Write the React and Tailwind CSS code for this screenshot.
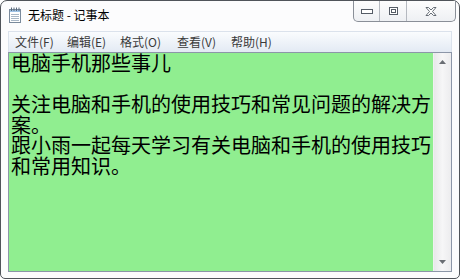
import React from "react";

function NotepadIcon() {
  return (
    <svg width="14" height="16" viewBox="0 0 14 16">
      <rect x="1.5" y="2.5" width="11" height="13" fill="#ffffff" stroke="#7a8a9c" />
      <rect x="2" y="3" width="10" height="2" fill="#9fc3e6" />
      <line x1="3" y1="7.5" x2="11" y2="7.5" stroke="#a9b7c6" />
      <line x1="3" y1="9.5" x2="11" y2="9.5" stroke="#a9b7c6" />
      <line x1="3" y1="11.5" x2="11" y2="11.5" stroke="#a9b7c6" />
      <line x1="3" y1="13.5" x2="11" y2="13.5" stroke="#a9b7c6" />
      <line x1="3.5" y1="0.5" x2="3.5" y2="4" stroke="#5b6b7c" />
      <line x1="6" y1="0.5" x2="6" y2="4" stroke="#5b6b7c" />
      <line x1="8.5" y1="0.5" x2="8.5" y2="4" stroke="#5b6b7c" />
      <line x1="11" y1="0.5" x2="11" y2="4" stroke="#5b6b7c" />
    </svg>
  );
}

function CaptionButtons() {
  return (
    <div className="flex h-[21px] border border-t-0 border-[#8a8f98] rounded-b-[5px] bg-gradient-to-b from-[#fdfdfd] to-[#eef0f3] overflow-hidden -mr-[4px]">
      <div className="w-[26px] flex items-center justify-center border-r border-[#b5b9c0]">
        <svg width="12" height="5" viewBox="0 0 12 5">
          <rect x="0.5" y="0.5" width="11" height="4" fill="#ffffff" stroke="#555c66" />
        </svg>
      </div>
      <div className="w-[27px] flex items-center justify-center border-r border-[#b5b9c0]">
        <svg width="9" height="8" viewBox="0 0 9 8">
          <rect x="0.5" y="0.5" width="8" height="7" fill="#ffffff" stroke="#555c66" />
          <rect x="2.5" y="2.5" width="4" height="3" fill="none" stroke="#555c66" />
        </svg>
      </div>
      <div className="w-[48px] flex items-center justify-center">
        <svg width="12" height="9" viewBox="0 0 12 9">
          <path
            d="M1 0.5 L3.5 0.5 L6 3 L8.5 0.5 L11 0.5 L7.5 4.5 L11 8.5 L8.5 8.5 L6 6 L3.5 8.5 L1 8.5 L4.5 4.5 Z"
            fill="#ffffff"
            stroke="#555c66"
            strokeWidth="0.9"
            strokeLinejoin="round"
          />
        </svg>
      </div>
    </div>
  );
}

export default function App() {
  const menus = [
    ["文件(F)", "w-[52px]"],
    ["编辑(E)", "w-[53px]"],
    ["格式(O)", "w-[57px]"],
    ["查看(V)", "w-[54px]"],
    ["帮助(H)", "w-[54px]"],
  ];
  return (
    <div
      className="w-[461px] h-[280px] bg-white"
      style={{ fontFamily: '"Noto Sans CJK SC", "Noto Sans", sans-serif' }}
    >
      <div className="w-[460px] h-[279px] border border-[#50545a] rounded-t-[7px] rounded-b-[5px] bg-[#fcfcfd] flex flex-col px-[7px] pb-[6px]">
        {/* title bar */}
        <div className="h-[30px] flex items-start justify-between shrink-0">
          <div className="flex items-center h-[28px] gap-[6px]">
            <NotepadIcon />
            <span className="text-[12px] leading-none text-black">无标题 - 记事本</span>
          </div>
          <CaptionButtons />
        </div>
        {/* menu bar */}
        <div className="h-[21px] shrink-0 flex items-center border border-b-0 border-[#dbe2ec] bg-gradient-to-b from-[#fafcfe] to-[#e3eaf4] pl-[6px]">
          {menus.map(([t, w]) => (
            <div key={t} className={`${w} text-[12px] leading-none text-[#3a3a3a]`}>
              {t}
            </div>
          ))}
        </div>
        {/* edit area */}
        <div className="flex-1 flex border border-[#8c96a8] min-h-0">
          <div className="flex-1 bg-[#90ee90] pl-[2px]">
            <div className="text-[20px] leading-[20.6px] text-black">
              <div>电脑手机那些事儿</div>
              <div>&nbsp;</div>
              <div>关注电脑和手机的使用技巧和常见问题的解决方</div>
              <div>案。</div>
              <div>跟小雨一起每天学习有关电脑和手机的使用技巧</div>
              <div>和常用知识。</div>
            </div>
          </div>
          <div className="w-[18px] bg-gradient-to-r from-[#e8e8ea] via-[#f6f6f7] to-[#ececee] border-l border-[#f0f0f0] flex flex-col justify-between items-center py-[7px]">
            <svg width="7" height="4" viewBox="0 0 7 4">
              <path d="M0 4 L3.5 0 L7 4 Z" fill="#6a6e74" />
            </svg>
            <svg width="7" height="4" viewBox="0 0 7 4">
              <path d="M0 0 L7 0 L3.5 4 Z" fill="#6a6e74" />
            </svg>
          </div>
        </div>
      </div>
    </div>
  );
}
